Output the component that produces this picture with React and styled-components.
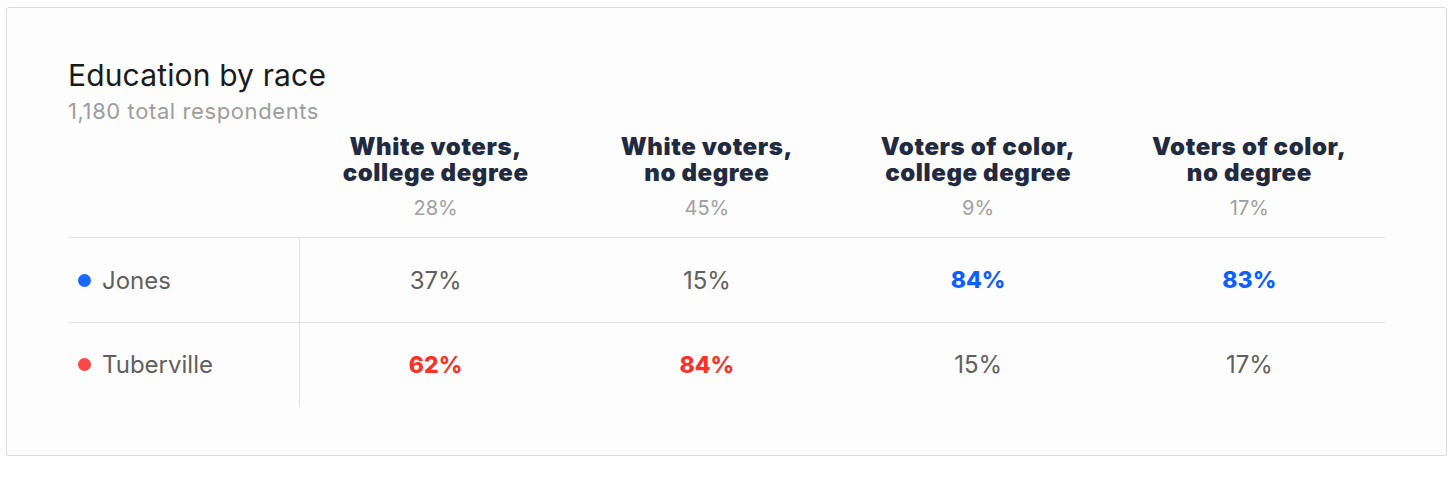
import React from "react";
import styled, { createGlobalStyle } from "styled-components";

const Global = createGlobalStyle`
  html, body { margin: 0; padding: 0; background: #ffffff; }
  body { font-family: Inter, "DejaVu Sans", sans-serif; }
`;

const Page = styled.div`
  padding: 7px 9px 0 6px;
`;

const Card = styled.section`
  box-sizing: border-box;
  height: 449px;
  border: 1px solid #dcdcdc;
  border-radius: 3px;
  box-shadow: 0 1px 1px rgba(0, 0, 0, 0.05);
  background: #fdfdfd;
  padding: 50px 61px 0 61px;
`;

const Title = styled.h2`
  margin: 0;
  font-size: 30px;
  line-height: 34px;
  font-weight: 400;
  letter-spacing: 0.15px;
  color: #1a1a1a;
`;

const Subtitle = styled.div`
  margin-top: 7px;
  font-size: 22px;
  line-height: 25px;
  letter-spacing: 0.6px;
  color: #9e9e9e;
`;

const Table = styled.div`
  margin-top: 10px;
  display: grid;
  grid-template-columns: 232px repeat(4, 1fr);
`;

const HeadCell = styled.div`
  text-align: center;
  padding-bottom: 17px;
  border-bottom: 1px solid #e0e0e0;
`;

const HeadLabel = styled.div`
  font-size: 24px;
  line-height: 26px;
  font-weight: 900;
  letter-spacing: 0.6px;
  color: #212a3f;
`;

const HeadShare = styled.div`
  margin-top: 11px;
  font-size: 20px;
  line-height: 23px;
  color: #a0a0a0;
`;

const NameCell = styled.div`
  box-sizing: border-box;
  height: 84px;
  display: flex;
  align-items: center;
  gap: 11px;
  padding-left: 10px;
  border-top: ${(p) => (p.$first ? "none" : "1px solid #e0e0e0")};
  border-right: 1px solid #e0e0e0;
  font-size: 24px;
  color: #606060;
`;

const Dot = styled.span`
  width: 13px;
  height: 13px;
  border-radius: 50%;
  background: ${(p) => p.$color};
  flex: none;
`;

const ValueCell = styled.div`
  box-sizing: border-box;
  height: 84px;
  display: flex;
  align-items: center;
  justify-content: center;
  border-top: ${(p) => (p.$first ? "none" : "1px solid #e0e0e0")};
  font-size: ${(p) => (p.$win ? 23 : 24)}px;
  font-weight: ${(p) => (p.$win ? 800 : 400)};
  color: ${(p) => (p.$win ? p.$color : "#606060")};
`;

const groups = [
  { a: "White voters,", b: "college degree", share: "28%" },
  { a: "White voters,", b: "no degree", share: "45%" },
  { a: "Voters of color,", b: "college degree", share: "9%" },
  { a: "Voters of color,", b: "no degree", share: "17%" },
];

const candidates = [
  { name: "Jones", dot: "#1a66ff", text: "#0f5fff", values: [37, 15, 84, 83] },
  { name: "Tuberville", dot: "#ff4646", text: "#fa3228", values: [62, 84, 15, 17] },
];

export default function App() {
  return (
    <>
      <Global />
      <Page>
        <Card>
          <Title>Education by race</Title>
          <Subtitle>1,180 total respondents</Subtitle>
          <Table>
            <HeadCell />
            {groups.map((g, i) => (
              <HeadCell key={i}>
                <HeadLabel>
                  {g.a}
                  <br />
                  {g.b}
                </HeadLabel>
                <HeadShare>{g.share}</HeadShare>
              </HeadCell>
            ))}
            {candidates.map((c, ci) => (
              <React.Fragment key={c.name}>
                <NameCell $first={ci === 0}>
                  <Dot $color={c.dot} />
                  {c.name}
                </NameCell>
                {c.values.map((v, vi) => {
                  const other = candidates[1 - ci].values[vi];
                  return (
                    <ValueCell
                      key={vi}
                      $first={ci === 0}
                      $win={v > other}
                      $color={c.text}
                    >
                      {v}%
                    </ValueCell>
                  );
                })}
              </React.Fragment>
            ))}
          </Table>
        </Card>
      </Page>
    </>
  );
}
